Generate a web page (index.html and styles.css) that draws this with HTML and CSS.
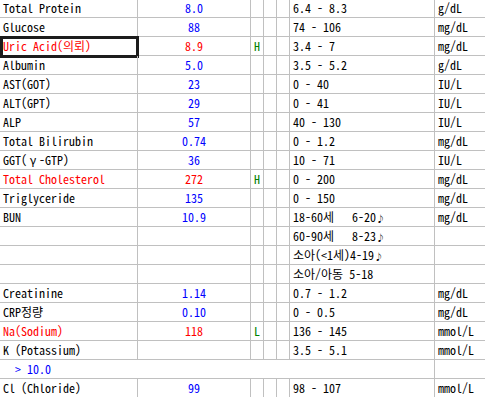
FILE: index.html
```html
<!DOCTYPE html>
<html lang="ko">
<head>
<meta charset="utf-8">
<link rel="stylesheet" href="styles.css">
</head>
<body>
<div class="sheet">
  <div class="row"><div class="c name">Total Protein</div><div class="c val blue">8.0</div><div class="c flag"></div><div class="c flag"></div><div class="c flag"></div><div class="c range">6.4 - 8.3</div><div class="c unit">g/dL</div></div>
  <div class="row"><div class="c name">Glucose</div><div class="c val blue">88</div><div class="c flag"></div><div class="c flag"></div><div class="c flag"></div><div class="c range">74 - 106</div><div class="c unit">mg/dL</div></div>
  <div class="row"><div class="c name red selected">Uric Acid(의뢰)</div><div class="c val red">8.9</div><div class="c flag">H</div><div class="c flag"></div><div class="c flag"></div><div class="c range">3.4 - 7</div><div class="c unit">mg/dL</div></div>
  <div class="row"><div class="c name">Albumin</div><div class="c val blue">5.0</div><div class="c flag"></div><div class="c flag"></div><div class="c flag"></div><div class="c range">3.5 - 5.2</div><div class="c unit">g/dL</div></div>
  <div class="row"><div class="c name">AST(GOT)</div><div class="c val blue">23</div><div class="c flag"></div><div class="c flag"></div><div class="c flag"></div><div class="c range">0 - 40</div><div class="c unit">IU/L</div></div>
  <div class="row"><div class="c name">ALT(GPT)</div><div class="c val blue">29</div><div class="c flag"></div><div class="c flag"></div><div class="c flag"></div><div class="c range">0 - 41</div><div class="c unit">IU/L</div></div>
  <div class="row"><div class="c name">ALP</div><div class="c val blue">57</div><div class="c flag"></div><div class="c flag"></div><div class="c flag"></div><div class="c range">40 - 130</div><div class="c unit">IU/L</div></div>
  <div class="row"><div class="c name">Total Bilirubin</div><div class="c val blue">0.74</div><div class="c flag"></div><div class="c flag"></div><div class="c flag"></div><div class="c range">0 - 1.2</div><div class="c unit">mg/dL</div></div>
  <div class="row"><div class="c name">GGT(<span class="wide">γ</span>-GTP)</div><div class="c val blue">36</div><div class="c flag"></div><div class="c flag"></div><div class="c flag"></div><div class="c range">10 - 71</div><div class="c unit">IU/L</div></div>
  <div class="row"><div class="c name red">Total Cholesterol</div><div class="c val red">272</div><div class="c flag">H</div><div class="c flag"></div><div class="c flag"></div><div class="c range">0 - 200</div><div class="c unit">mg/dL</div></div>
  <div class="row"><div class="c name">Triglyceride</div><div class="c val blue">135</div><div class="c flag"></div><div class="c flag"></div><div class="c flag"></div><div class="c range">0 - 150</div><div class="c unit">mg/dL</div></div>
  <div class="row"><div class="c name">BUN</div><div class="c val blue">10.9</div><div class="c flag"></div><div class="c flag"></div><div class="c flag"></div><div class="c range">18-60세   6-20<span class="cr">♪</span></div><div class="c unit">mg/dL</div></div>
  <div class="row"><div class="c name"></div><div class="c val"></div><div class="c flag"></div><div class="c flag"></div><div class="c flag"></div><div class="c range">60-90세   8-23<span class="cr">♪</span></div><div class="c unit"></div></div>
  <div class="row"><div class="c name"></div><div class="c val"></div><div class="c flag"></div><div class="c flag"></div><div class="c flag"></div><div class="c range">소아(&lt;1세)4-19<span class="cr">♪</span></div><div class="c unit"></div></div>
  <div class="row"><div class="c name"></div><div class="c val"></div><div class="c flag"></div><div class="c flag"></div><div class="c flag"></div><div class="c range">소아/아동 5-18</div><div class="c unit"></div></div>
  <div class="row"><div class="c name">Creatinine</div><div class="c val blue">1.14</div><div class="c flag"></div><div class="c flag"></div><div class="c flag"></div><div class="c range">0.7 - 1.2</div><div class="c unit">mg/dL</div></div>
  <div class="row"><div class="c name">CRP정량</div><div class="c val blue">0.10</div><div class="c flag"></div><div class="c flag"></div><div class="c flag"></div><div class="c range">0 - 0.5</div><div class="c unit">mg/dL</div></div>
  <div class="row"><div class="c name red">Na(Sodium)</div><div class="c val red">118</div><div class="c flag">L</div><div class="c flag"></div><div class="c flag"></div><div class="c range">136 - 145</div><div class="c unit">mmol/L</div></div>
  <div class="row"><div class="c name">K (Potassium)</div><div class="c val"></div><div class="c flag"></div><div class="c flag"></div><div class="c flag"></div><div class="c range">3.5 - 5.1</div><div class="c unit">mmol/L</div></div>
  <div class="row"><div class="c name span blue">  &gt; 10.0</div><div class="c unit"></div></div>
  <div class="row"><div class="c name">Cl (Chloride)</div><div class="c val blue">99</div><div class="c flag"></div><div class="c flag"></div><div class="c flag"></div><div class="c range">98 - 107</div><div class="c unit">mmol/L</div></div>
</div>
</body>
</html>
```
FILE: styles.css
```css
html, body {
  margin: 0;
  padding: 0;
  background: #ffffff;
  overflow: hidden;
}
.sheet {
  margin-top: -1px;
  width: 485px;
  font-family: "Noto Sans Mono CJK KR", "Noto Sans CJK KR", "DejaVu Sans Mono", monospace;
  font-size: 12px;
  color: #000000;
}
.row {
  display: grid;
  grid-template-columns: 138px 113px 13px 13px 13px 145px 1fr;
  height: 19px;
}
.c {
  box-sizing: border-box;
  height: 19px;
  line-height: 18px;
  border-right: 1px solid #c0c0c0;
  border-bottom: 1px solid #c0c0c0;
  white-space: pre;
  overflow: hidden;
}
.name { padding-left: 3px; position: relative; overflow: visible; }
.val { text-align: center; }
.flag { text-align: center; color: #008000; }
.range { padding-left: 3px; }
.unit { padding-left: 3px; border-right: none; }
.span { grid-column: 1 / 7; }
.blue { color: #0000ff; }
.red { color: #ff0000; }
.wide { display: inline-block; width: 12px; text-align: center; }
.cr { font-size: 9px; }
.selected::after {
  content: "";
  position: absolute;
  left: 0;
  top: -1px;
  width: 139px;
  height: 22px;
  box-sizing: border-box;
  border: 3px solid #1c1c1c;
}
```
